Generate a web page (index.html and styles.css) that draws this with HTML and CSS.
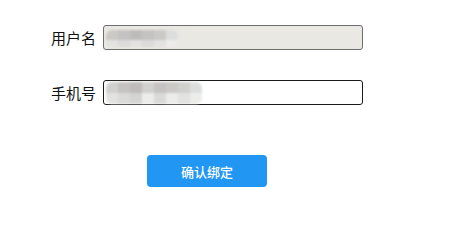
FILE: index.html
```html
<!DOCTYPE html>
<html lang="zh">
<head>
<meta charset="utf-8">
<link rel="stylesheet" href="styles.css">
</head>
<body>
<div class="form">
  <div class="row">
    <label class="label">用户名</label>
    <div class="field">
      <input class="input readonly" readonly>
      <div class="mosaic m1">
        <span class="c1"></span><span class="c2"></span><span class="c3"></span><span class="c2"></span><span class="c1"></span><span class="c5"></span>
        <span class="l1"></span><span class="l2"></span><span class="l1"></span><span class="l2"></span><span class="l1"></span><span class="l3"></span>
      </div>
    </div>
  </div>
  <div class="row">
    <label class="label">手机号</label>
    <div class="field">
      <input class="input">
      <div class="mosaic m2">
        <span class="c4"></span><span class="c2"></span><span class="c3"></span><span class="c4"></span><span class="c2"></span><span class="c1"></span><span class="c4"></span><span class="c5"></span>
        <span class="l1"></span><span class="l2"></span><span class="l4"></span><span class="l3"></span><span class="l2"></span><span class="l3"></span><span class="l1"></span><span class="l3"></span>
      </div>
    </div>
  </div>
  <div class="actions">
    <button class="btn">确认绑定</button>
  </div>
</div>
</body>
</html>
```

FILE: styles.css
```css
html, body {
  margin: 0;
  padding: 0;
  background: #fff;
}
body {
  font-family: "Noto Sans CJK SC", "Noto Sans", sans-serif;
  color: #111;
}
.form {
  padding: 25px 0 0 51px;
}
.row {
  display: flex;
  align-items: center;
  gap: 7px;
  height: 25px;
  margin-bottom: 30px;
}
.label {
  display: block;
  font-size: 15px;
  line-height: 25px;
  height: 25px;
}
.field {
  position: relative;
  width: 260px;
  height: 25px;
}
.input {
  display: block;
  box-sizing: border-box;
  width: 260px;
  height: 25px;
  margin: 0;
  padding: 0 4px;
  border: 1px solid #1a1a1a;
  border-radius: 3px;
  background: #fff;
  outline: none;
}
.input.readonly {
  border-color: #6e6e6e;
  background: #e9e8e2;
}
.mosaic {
  position: absolute;
  display: grid;
  filter: blur(0.8px);
  border-radius: 6px;
  overflow: hidden;
}
.m1 {
  left: 3px;
  top: 5px;
  grid-template-columns: repeat(6, 12px);
  grid-template-rows: 10px 7px;
}
.m2 {
  left: 3px;
  top: 2px;
  grid-template-columns: repeat(8, 12px);
  grid-template-rows: 11px 11px;
}
.c1 { background: #cbc9c6; }
.c2 { background: #c5c3c1; }
.c3 { background: #bebcba; }
.c4 { background: #d0d0cf; }
.c5 { background: #dcdedd; }
.l1 { background: #e2e2e0; }
.l2 { background: #dadad9; }
.l3 { background: #ececeb; }
.l4 { background: #d4d4d3; }
.actions {
  padding-top: 20px;
  padding-left: 96px;
}
.btn {
  display: block;
  width: 120px;
  height: 32px;
  border: none;
  border-radius: 4px;
  background: #2196f3;
  color: #fff;
  font-family: "Noto Sans CJK SC", sans-serif;
  font-size: 13px;
  font-weight: 500;
  padding: 0;
}
```
